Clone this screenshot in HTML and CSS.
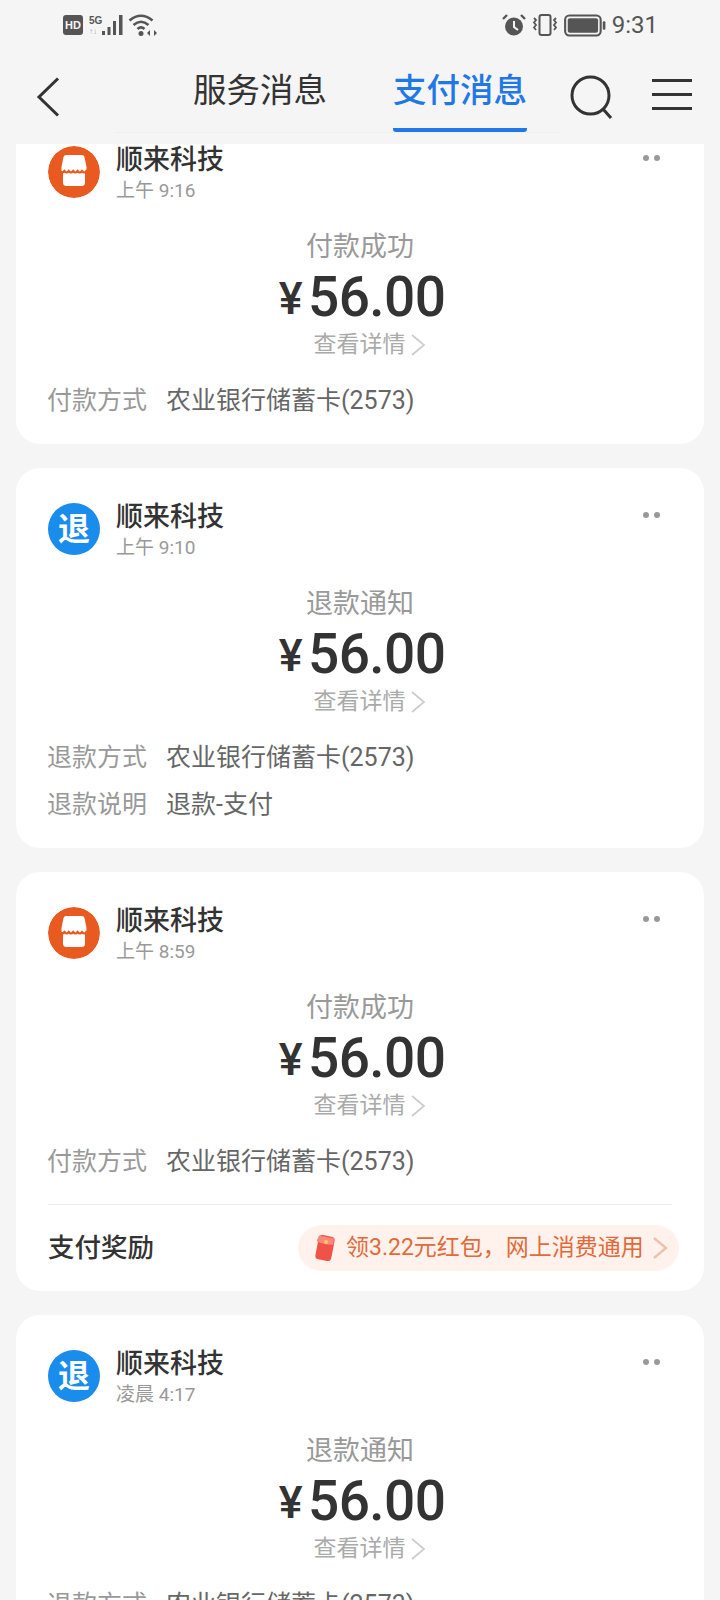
FILE: index.html
```html
<!DOCTYPE html>
<html lang="zh-CN">
<head>
<meta charset="utf-8">
<title>支付消息</title>
<link rel="stylesheet" href="styles.css">
</head>
<body>
<svg class="defs" width="0" height="0" aria-hidden="true">
  <defs>
    <symbol id="shop" viewBox="0 0 52 52">
      <path d="M18 9H34Q36 9 36.500 11L38.500 21V25H13.500V21L15.500 11Q16 9 18 9Z" fill="#fff"/>
      <path d="M15 25H37V36.500Q37 40 33.500 40H18.500Q15 40 15 36.500Z" fill="#fff"/>
      <path d="M12 25Q14.200 28 16.400 25Q18.600 28 20.800 25Q23 28 25.200 25Q27.400 28 29.600 25Q31.800 28 34 25Q36.200 28 38.400 25Q39.500 26.500 40.500 25.500" fill="none" stroke="#e85a1f" stroke-width="2.200"/>
    </symbol>
    <symbol id="chev" viewBox="0 0 16 24">
      <path d="M2 2 14 12 2 22" fill="none" stroke="currentColor" stroke-width="1.700"/>
    </symbol>
  </defs>
</svg>

<header class="top">
  <div class="status">
    <div class="status-group">
      <span class="hd">HD</span>
      <span class="net"><span class="net-5g">5G</span><span class="net-arrows">↑↓</span></span>
      <svg class="signal" width="23" height="22" viewBox="0 0 23 22"><path d="M1 17h3v4H1zM6.500 13h3v8h-3zM12 7h3v14h-3zM18 1h3.500v20H18z" fill="#555"/></svg>
      <svg class="wifi" width="34" height="24" viewBox="0 0 34 24"><g fill="none" stroke="#555" stroke-width="2.600"><path d="M1.500 7.500Q13 -2 24.500 7.500"/><path d="M5.500 12Q13 5.500 20.500 12"/><path d="M9.500 16Q13 12.800 16.500 16"/></g><circle cx="13" cy="20.500" r="2.500" fill="#555"/><path d="M22 17l-3 3 3 3zM26 17l3 3-3 3z" fill="#555"/></svg>
    </div>
    <div class="status-group status-right">
      <svg width="24" height="24" viewBox="0 0 24 24"><circle cx="12" cy="13.500" r="9" fill="#555"/><path d="M12 8v6l4 3" fill="none" stroke="#f5f5f5" stroke-width="2"/><path d="M1 6 5 2M23 6 19 2" stroke="#555" stroke-width="2.400"/></svg>
      <svg width="30" height="24" viewBox="0 0 28 24"><rect x="8.500" y="2" width="11" height="20" rx="2" fill="none" stroke="#555" stroke-width="2"/><path d="M3 5l2 2-2 2.500 2 2.500-2 2.500 2 2.500M25 5l-2 2 2 2.500-2 2.500 2 2.500-2 2.500" fill="none" stroke="#555" stroke-width="1.800"/></svg>
      <svg width="42" height="23" viewBox="0 0 40 22"><rect x="1" y="1.500" width="34" height="19" rx="4" fill="none" stroke="#555" stroke-width="2"/><rect x="3.500" y="4" width="29" height="14" rx="2" fill="#555"/><rect x="37" y="7" width="2.500" height="8" rx="1" fill="#555"/></svg>
      <span class="clock">9:31</span>
    </div>
  </div>
  <nav class="nav">
    <svg class="back" width="24" height="40" viewBox="0 0 24 40"><path d="M22 1.500 3 20 22 38.500" fill="none" stroke="#333" stroke-width="3"/></svg>
    <div class="tabs">
      <span class="tab">服务消息</span>
      <span class="tab tab-active">支付消息</span>
    </div>
    <svg class="search" width="44" height="44" viewBox="0 0 44 44"><circle cx="20.500" cy="20.500" r="18.500" fill="none" stroke="#333" stroke-width="3"/><path d="M33 34 41 43" stroke="#333" stroke-width="3"/></svg>
    <div class="menu"><i></i><i></i><i></i></div>
  </nav>
</header>

<main class="list">
  <section class="card card-clipped">
    <div class="head">
      <svg class="avatar" viewBox="0 0 52 52"><circle cx="26" cy="26" r="26" fill="#e85a1f"/><use href="#shop"/></svg>
      <div class="who"><div class="name">顺来科技</div><div class="time">上午 9:16</div></div>
      <div class="dots"><i></i><i></i></div>
    </div>
    <div class="title">付款成功</div>
    <div class="amount"><span class="yen">¥</span>56.00</div>
    <div class="link">查看详情<svg class="chev" width="16" height="24"><use href="#chev"/></svg></div>
    <div class="row"><span class="label">付款方式</span><span class="value">农业银行储蓄卡(2573)</span></div>
  </section>

  <section class="card">
    <div class="head">
      <div class="avatar avatar-blue">退</div>
      <div class="who"><div class="name">顺来科技</div><div class="time">上午 9:10</div></div>
      <div class="dots"><i></i><i></i></div>
    </div>
    <div class="title">退款通知</div>
    <div class="amount"><span class="yen">¥</span>56.00</div>
    <div class="link">查看详情<svg class="chev" width="16" height="24"><use href="#chev"/></svg></div>
    <div class="row"><span class="label">退款方式</span><span class="value">农业银行储蓄卡(2573)</span></div>
    <div class="row"><span class="label">退款说明</span><span class="value">退款-支付</span></div>
  </section>

  <section class="card card-reward">
    <div class="head">
      <svg class="avatar" viewBox="0 0 52 52"><circle cx="26" cy="26" r="26" fill="#e85a1f"/><use href="#shop"/></svg>
      <div class="who"><div class="name">顺来科技</div><div class="time">上午 8:59</div></div>
      <div class="dots"><i></i><i></i></div>
    </div>
    <div class="title">付款成功</div>
    <div class="amount"><span class="yen">¥</span>56.00</div>
    <div class="link">查看详情<svg class="chev" width="16" height="24"><use href="#chev"/></svg></div>
    <div class="row"><span class="label">付款方式</span><span class="value">农业银行储蓄卡(2573)</span></div>
    <div class="reward">
      <span class="reward-label">支付奖励</span>
      <div class="pill">
        <svg class="packet" width="24" height="28" viewBox="0 0 22 26"><rect x="3.500" y="1.500" width="15" height="23" rx="3.500" transform="rotate(11 11 13)" fill="#f0524a"/><path d="M5.500 1.500 19.500 4.200 18.500 10Q10 10.500 3.200 6.500Z" fill="#f8877c"/><circle cx="12" cy="7.500" r="2" fill="#fbc65a"/></svg>
        <span class="pill-text">领3.22元红包，网上消费通用</span>
        <svg class="pill-chev" width="16" height="24" viewBox="0 0 16 24"><path d="M2 2 14 12 2 22" fill="none" stroke="#eec0ae" stroke-width="2.400"/></svg>
      </div>
    </div>
  </section>

  <section class="card">
    <div class="head">
      <div class="avatar avatar-blue">退</div>
      <div class="who"><div class="name">顺来科技</div><div class="time">凌晨 4:17</div></div>
      <div class="dots"><i></i><i></i></div>
    </div>
    <div class="title">退款通知</div>
    <div class="amount"><span class="yen">¥</span>56.00</div>
    <div class="link">查看详情<svg class="chev" width="16" height="24"><use href="#chev"/></svg></div>
    <div class="row"><span class="label">退款方式</span><span class="value">农业银行储蓄卡(2573)</span></div>
  </section>
</main>
</body>
</html>
```
FILE: styles.css
```css
* { box-sizing: border-box; }
html, body { margin: 0; padding: 0; }
body {
  width: 720px;
  height: 1600px;
  overflow: hidden;
  background: #f5f5f5;
  font-family: "Roboto", "Noto Sans CJK SC", sans-serif;
  color: #333;
}
.defs { display: block; height: 0; }

.top { height: 144px; }
.status {
  height: 50px;
  padding: 0 62px 0 63px;
  display: flex;
  justify-content: space-between;
  align-items: center;
}
.status-group { display: flex; align-items: center; gap: 6px; }
.status-right { gap: 4px; }
.hd {
  width: 20px;
  height: 20px;
  border-radius: 3px;
  background: #555;
  color: #f5f5f5;
  font: 700 11px/20px "Liberation Sans", sans-serif;
  text-align: center;
}
.net { display: flex; flex-direction: column; width: 12px; margin-right: -6px; }
.net-5g { font: 700 10px/12px "Liberation Sans", sans-serif; color: #555; }
.net-arrows { font: 8px/9px "Liberation Sans", sans-serif; color: #aaa; }
.wifi { margin-left: -2px; }
.clock { font: 400 24px/28px "Roboto", sans-serif; color: #555; margin-left: 2px; }

.nav {
  height: 94px;
  padding: 0 28px 0 36px;
  display: flex;
  align-items: flex-start;
}
.back { margin-top: 27px; flex: none; }
.tabs {
  width: 445px;
  margin-left: 55px;
  margin-right: 10px;
  height: 83px;
  border-bottom: 1px solid #eee;
  display: flex;
  gap: 66px;
  padding-left: 78px;
  flex: none;
}
.tab {
  height: 82px;
  width: 134px;
  padding-top: 17px;
  font-size: 33.500px;
  line-height: 48px;
  white-space: nowrap;
  color: #333;
}
.tab-active {
  color: #1f78e6;
  font-weight: 500;
  border-bottom: 4px solid #1f78e6;
  border-radius: 0 0 3px 3px;
}
.search { margin-top: 25px; flex: none; }
.menu {
  margin-left: 38px;
  margin-top: 29px;
  width: 40px;
  height: 31px;
  display: flex;
  flex-direction: column;
  justify-content: space-between;
  flex: none;
}
.menu i { display: block; height: 3px; background: #333; }

.list {
  height: 1456px;
  overflow: hidden;
  padding: 0 16px;
  display: flex;
  flex-direction: column;
  gap: 24px;
}
.card {
  flex: none;
  background: #fff;
  border-radius: 24px;
  padding: 31px 32px 26px;
}
.card-clipped { margin-top: -33px; }
.card-reward { padding-bottom: 20px; }

.head { display: flex; height: 60px; }
.avatar {
  width: 52px;
  height: 52px;
  flex: none;
  margin-top: 4px;
  border-radius: 50%;
}
.avatar-blue {
  background: #1a8cec;
  color: #fff;
  font-size: 32px;
  font-weight: 700;
  line-height: 52px;
  text-align: center;
}
.who { margin-left: 16px; flex: 1; padding-top: 2px; }
.name { font-size: 27px; font-weight: 500; line-height: 32px; color: #333; }
.time { font-size: 19px; line-height: 26px; margin-top: 2px; color: #999; }
.dots { display: flex; gap: 5px; padding: 13px 12px 0 0; }
.dots i { display: block; width: 6px; height: 6px; border-radius: 50%; background: #999; }

.title {
  margin-top: 28px;
  text-align: center;
  font-size: 27px;
  line-height: 34px;
  color: #999;
}
.amount {
  margin-top: 1px;
  height: 64px;
  padding-left: 4px;
  display: flex;
  justify-content: center;
  align-items: center;
  font-family: "Roboto", sans-serif;
  font-size: 55px;
  font-weight: 500;
  line-height: 64px;
  color: #333;
  letter-spacing: -0.6px;
}
.yen { font-size: 45px; font-weight: 500; margin-right: 6px; margin-top: 4px; }
.link {
  height: 30px;
  margin-top: 1px;
  display: flex;
  justify-content: center;
  align-items: center;
  gap: 4px;
  padding-left: 19px;
  font-size: 23px;
  line-height: 30px;
  color: #aaa;
}
.chev { color: #ccc; }

.row { display: flex; margin: 13px 0 0 -1px; font-size: 25px; line-height: 34px; }
.link + .row { margin-top: 24px; }
.label { width: 119px; flex: none; color: #999; }
.value { color: #666; white-space: nowrap; }

.reward {
  margin-top: 25px;
  border-top: 1px solid #eee;
  padding-top: 20px;
  display: flex;
  justify-content: space-between;
  align-items: center;
}
.reward-label { font-size: 26.500px; font-weight: 500; color: #333; line-height: 46px; }
.pill {
  width: 381px;
  height: 46px;
  margin-right: -7px;
  border-radius: 23px;
  background: #fff2ec;
  display: flex;
  align-items: center;
  padding-left: 15px;
}
.pill-text {
  margin-left: 9px;
  font-size: 23px;
  line-height: 30px;
  color: #e26a3a;
  white-space: nowrap;
}
.pill-chev { margin-left: 8px; flex: none; }
```
